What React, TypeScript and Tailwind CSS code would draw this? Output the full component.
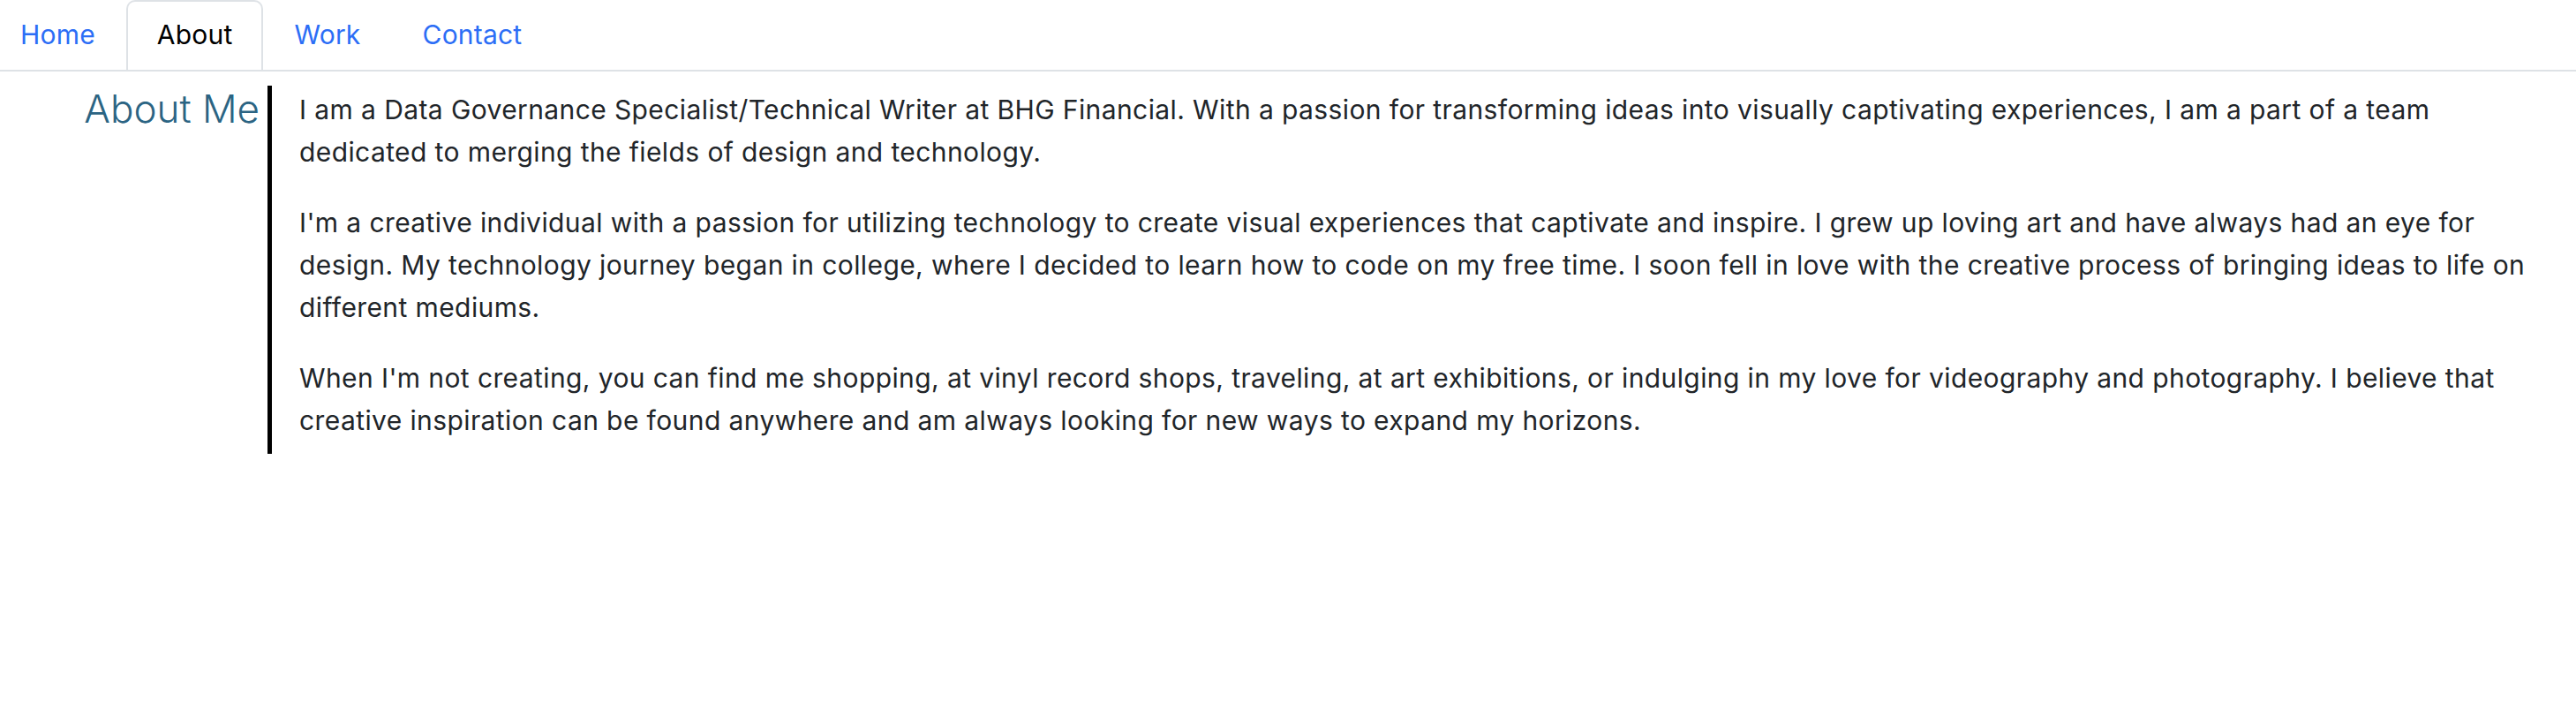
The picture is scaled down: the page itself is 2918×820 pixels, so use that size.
const tabs = ["Home", "About", "Work", "Contact"];

const paragraphs = [
  "I am a Data Governance Specialist/Technical Writer at BHG Financial. With a passion for transforming ideas into visually captivating experiences, I am a part of a team dedicated to merging the fields of design and technology.",
  "I'm a creative individual with a passion for utilizing technology to create visual experiences that captivate and inspire. I grew up loving art and have always had an eye for design. My technology journey began in college, where I decided to learn how to code on my free time. I soon fell in love with the creative process of bringing ideas to life on different mediums.",
  "When I'm not creating, you can find me shopping, at vinyl record shops, traveling, at art exhibitions, or indulging in my love for videography and photography. I believe that creative inspiration can be found anywhere and am always looking for new ways to expand my horizons.",
];

export default function App() {
  return (
    <div className="min-h-[820px] w-full bg-white font-['Inter',sans-serif] text-[#212529]">
      <nav className="flex border-b-2 border-[#dee2e6]">
        <ul className="-mb-[2px] -ml-[12px] flex">
          {tabs.map((tab) => {
            const active = tab === "About";
            return (
              <li key={tab}>
                <a
                  href="#"
                  className={
                    active
                      ? "block rounded-t-[10px] border-2 border-b-0 border-[#dee2e6] bg-white px-[33px] pt-[15px] pb-[17px] text-[30px] leading-[45px] tracking-[0.2px] text-black"
                      : "block border-2 border-transparent px-[33px] pt-[15px] pb-[17px] text-[30px] leading-[45px] tracking-[0.2px] text-[#2c6ef6]"
                  }
                >
                  {tab}
                </a>
              </li>
            );
          })}
        </ul>
      </nav>

      <section className="flex pt-[16px] pr-[47px]">
        <div className="w-[296px] shrink-0 pr-[2px] text-right">
          <h2 className="text-[44px] leading-[53px] font-light text-[#2b6483]">
            About Me
          </h2>
        </div>
        <div className="ml-[7px] flex-1 border-l-[5px] border-black pt-[3px] pb-[14px] pl-[31px]">
          {paragraphs.map((p, i) => (
            <p
              key={i}
              className={
                i === paragraphs.length - 1
                  ? "text-[30px] leading-[48px] tracking-[0.4px]"
                  : "mb-[32px] text-[30px] leading-[48px] tracking-[0.4px]"
              }
            >
              {p}
            </p>
          ))}
        </div>
      </section>
    </div>
  );
}
